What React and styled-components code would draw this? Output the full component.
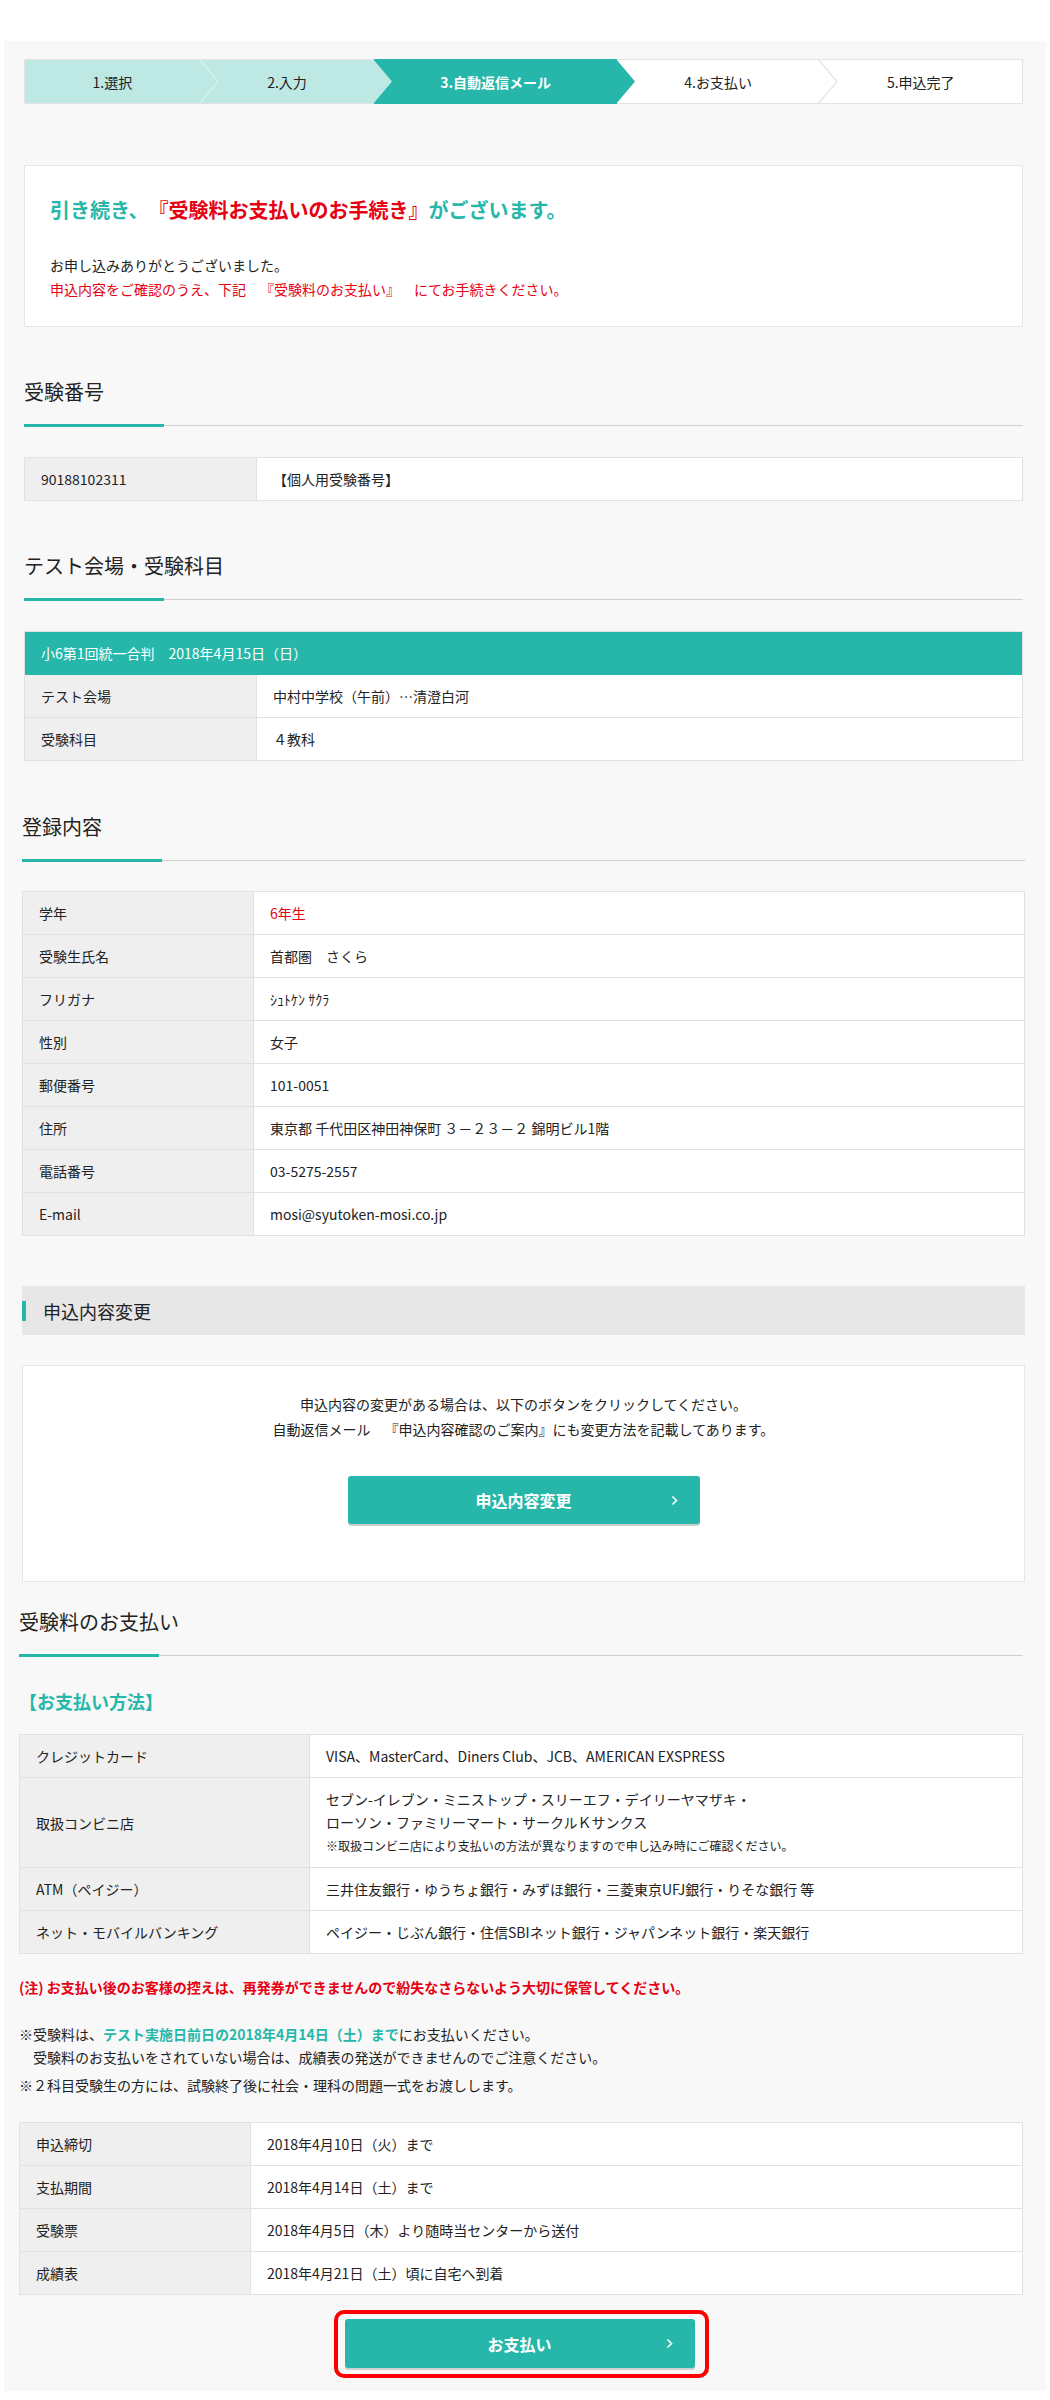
import React from 'react';
import styled, { createGlobalStyle } from 'styled-components';

const TEAL = '#26b7aa';
const LIGHT_TEAL = '#bde8e3';
const RED = '#e60012';
const LINE = '#e1e1e1';

const GlobalStyle = createGlobalStyle`
  * { box-sizing: border-box; }
  body {
    margin: 0;
    background: #fff;
    color: #222;
    font-family: "Noto Sans CJK JP", "Noto Sans", sans-serif;
    text-spacing-trim: space-all;
  }
`;

const Page = styled.div`
  padding-top: 41px;
`;

const Panel = styled.main`
  margin: 0 4px;
  padding: 18px 0 13px;
  background: #f8f8f8;
`;

const Section = styled.section`
  padding: 0 ${p => p.$r}px 0 ${p => p.$l}px;
`;

/* stepper */
const Stepper = styled.ol`
  display: flex;
  height: 45px;
  margin: 0;
  padding: 0;
  list-style: none;
`;

const Step = styled.li`
  position: relative;
  z-index: ${p => p.$z};
  flex: ${p => p.$grow} 1 0;
  display: flex;
  align-items: center;
  justify-content: center;
  background: ${p => p.$bg};
  color: ${p => (p.$active ? '#fff' : '#222')};
  font-size: 14px;
  font-weight: ${p => (p.$active ? 700 : 400)};
  border-top: 1px solid ${p => (p.$active ? TEAL : '#e3e3e3')};
  border-bottom: 1px solid ${p => (p.$active ? TEAL : '#e3e3e3')};
  &:first-child { border-left: 1px solid #e3e3e3; }
  &:last-child { border-right: 1px solid #e3e3e3; }
`;

const Chevron = styled.svg`
  position: absolute;
  top: -1px;
  right: -19px;
  width: 20px;
  height: 45px;
`;

const steps = [
  { label: '1.選択', grow: 175, bg: LIGHT_TEAL, line: '#dcf1ee' },
  { label: '2.入力', grow: 175, bg: LIGHT_TEAL },
  { label: '3.自動返信メール', grow: 243, bg: TEAL, active: true },
  { label: '4.お支払い', grow: 203, bg: '#fff', line: '#e3e3e3' },
  { label: '5.申込完了', grow: 203, bg: '#fff' },
];

/* message */
const MessageBox = styled.div`
  margin-top: 61px;
  padding: 29px 25px 25px;
  background: #fff;
  border: 1px solid #e6e6e6;
`;

const Lead = styled.h2`
  margin: 0;
  font-size: 20px;
  line-height: 30px;
  font-weight: 700;
  color: ${TEAL};
`;

const Em = styled.span`
  color: ${p => (p.$teal ? TEAL : RED)};
  font-weight: ${p => (p.$bold ? 700 : 'inherit')};
`;

const Body = styled.p`
  margin: ${p => p.$mt || 0}px 0 0;
  font-size: 14px;
  line-height: ${p => p.$lh || 24}px;
  color: ${p => (p.$red ? RED : '#222')};
`;

/* section title */
const Title = styled.h3`
  position: relative;
  margin: ${p => p.$mt}px 0 0;
  padding-bottom: 18px;
  font-size: 20px;
  line-height: 30px;
  font-weight: 400;
  border-bottom: 1px solid #cfcfcf;
  &::after {
    content: '';
    position: absolute;
    left: 0;
    bottom: -2px;
    width: 140px;
    height: 3px;
    background: ${TEAL};
  }
`;

/* tables */
const Table = styled.div`
  margin-top: ${p => p.$mt}px;
  border: 1px solid ${LINE};
  border-bottom: none;
  background: #fff;
  font-size: 14px;
`;

const Row = styled.div`
  display: grid;
  grid-template-columns: ${p => p.$label}px 1fr;
  border-bottom: 1px solid ${LINE};
`;

const HeadRow = styled.div`
  padding: 10px 16px;
  line-height: 22px;
  background: ${TEAL};
  color: #fff;
  border-bottom: 1px solid ${TEAL};
`;

const Label = styled.div`
  display: flex;
  align-items: center;
  padding: 10px 16px;
  line-height: 22px;
  background: #efefef;
  border-right: 1px solid ${LINE};
`;

const Value = styled.div`
  padding: 10px 16px;
  line-height: ${p => p.$lh || 22}px;
  color: ${p => (p.$red ? RED : 'inherit')};
`;

const Small = styled.div`
  font-size: 12px;
  line-height: 22px;
  padding-top: 1px;
`;

/* change request */
const Bar = styled.div`
  margin-top: 50px;
  height: 49px;
  display: flex;
  align-items: center;
  background: #e7e7e7;
`;

const BarTitle = styled.h3`
  margin: 0;
  padding-left: 17px;
  border-left: 4px solid ${TEAL};
  font-size: 18px;
  font-weight: 400;
  line-height: 20px;
`;

const ChangeBox = styled.div`
  margin-top: 30px;
  padding: 26px 20px 57px;
  background: #fff;
  border: 1px solid #e6e6e6;
  display: flex;
  flex-direction: column;
  align-items: center;
  text-align: center;
`;

const Button = styled.a`
  display: grid;
  grid-template-columns: 1fr auto 1fr;
  align-items: center;
  width: ${p => p.$w}px;
  height: ${p => p.$h}px;
  margin-top: ${p => p.$mt || 0}px;
  padding: 0 22px;
  background: ${TEAL};
  color: #fff;
  border-radius: 3px;
  box-shadow: 0 2px 0 #cfcfcf;
  font-size: 16px;
  font-weight: 700;
  text-decoration: none;
  span { grid-column: 2; }
  svg { grid-column: 3; justify-self: end; }
`;

const Arrow = () => (
  <svg width="7" height="11" viewBox="0 0 7 11">
    <polyline points="1.5,1.5 5.5,5.5 1.5,9.5" fill="none" stroke="#fff" strokeWidth="1.6" />
  </svg>
);

/* payment */
const MethodTitle = styled.h4`
  margin: 31px 0 0;
  font-size: 18px;
  line-height: 28px;
  font-weight: 700;
  color: ${TEAL};
`;

const Warning = styled.p`
  margin: 21px 0 0;
  font-size: 14px;
  line-height: 24px;
  font-weight: 700;
  color: ${RED};
`;

const Notes = styled.div`
  margin-top: 24px;
`;

const Center = styled.div`
  display: flex;
  justify-content: center;
  margin-top: 15px;
`;

const Highlight = styled.div`
  padding: 5px 10px 6px 7px;
  border: 4px solid #ff0000;
  border-radius: 10px;
`;

const entry = [
  ['学年', '6年生', true],
  ['受験生氏名', '首都圏　さくら'],
  ['フリガナ', 'ｼｭﾄｹﾝ ｻｸﾗ'],
  ['性別', '女子'],
  ['郵便番号', '101-0051'],
  ['住所', '東京都 千代田区神田神保町 ３－２３－２ 錦明ビル1階'],
  ['電話番号', '03-5275-2557'],
  ['E-mail', 'mosi@syutoken-mosi.co.jp'],
];

const schedule = [
  ['申込締切', '2018年4月10日（火）まで'],
  ['支払期間', '2018年4月14日（土）まで'],
  ['受験票', '2018年4月5日（木）より随時当センターから送付'],
  ['成績表', '2018年4月21日（土）頃に自宅へ到着'],
];

export default function App() {
  return (
    <Page>
      <GlobalStyle />
      <Panel>
        <Section $l={20} $r={23}>
          <Stepper>
            {steps.map((s, i) => (
              <Step key={s.label} $z={10 - i} $grow={s.grow} $bg={s.bg} $active={s.active}>
                {s.label}
                {i < steps.length - 1 && (
                  <Chevron viewBox="0 0 20 45">
                    <polygon points="0,0 19,22.5 0,45" fill={s.bg} />
                    {s.line && (
                      <polyline points="0,0 19,22.5 0,45" fill="none" stroke={s.line} strokeWidth="1.2" />
                    )}
                  </Chevron>
                )}
              </Step>
            ))}
          </Stepper>

          <MessageBox>
            <Lead>
              引き続き、<Em>『受験料お支払いのお手続き』</Em>がございます。
            </Lead>
            <Body $mt={28}>お申し込みありがとうございました。</Body>
            <Body $red>申込内容をご確認のうえ、下記　『受験料のお支払い』　にてお手続きください。</Body>
          </MessageBox>

          <Title $mt={50}>受験番号</Title>
          <Table $mt={31}>
            <Row $label={232}>
              <Label>90188102311</Label>
              <Value>【個人用受験番号】</Value>
            </Row>
          </Table>

          <Title $mt={50}>テスト会場・受験科目</Title>
          <Table $mt={31}>
            <HeadRow>小6第1回統一合判　2018年4月15日（日）</HeadRow>
            <Row $label={232}>
              <Label>テスト会場</Label>
              <Value>中村中学校（午前）…清澄白河</Value>
            </Row>
            <Row $label={232}>
              <Label>受験科目</Label>
              <Value>４教科</Value>
            </Row>
          </Table>
        </Section>

        <Section $l={18} $r={21}>
          <Title $mt={51}>登録内容</Title>
          <Table $mt={30}>
            {entry.map(([k, v, red]) => (
              <Row key={k} $label={231}>
                <Label>{k}</Label>
                <Value $red={red}>{v}</Value>
              </Row>
            ))}
          </Table>

          <Bar>
            <BarTitle>申込内容変更</BarTitle>
          </Bar>
          <ChangeBox>
            <Body $lh={25}>申込内容の変更がある場合は、以下のボタンをクリックしてください。</Body>
            <Body $lh={25}>自動返信メール　『申込内容確認のご案内』にも変更方法を記載してあります。</Body>
            <Button $w={352} $h={48} $mt={34}>
              <span>申込内容変更</span>
              <Arrow />
            </Button>
          </ChangeBox>
        </Section>

        <Section $l={15} $r={23}>
          <Title $mt={25}>受験料のお支払い</Title>
          <MethodTitle>【お支払い方法】</MethodTitle>
          <Table $mt={19}>
            <Row $label={290}>
              <Label>クレジットカード</Label>
              <Value>VISA、MasterCard、Diners Club、JCB、AMERICAN EXSPRESS</Value>
            </Row>
            <Row $label={290}>
              <Label>取扱コンビニ店</Label>
              <Value $lh={23}>
                セブン-イレブン・ミニストップ・スリーエフ・デイリーヤマザキ・
                <br />
                ローソン・ファミリーマート・サークルＫサンクス
                <Small>※取扱コンビニ店により支払いの方法が異なりますので申し込み時にご確認ください。</Small>
              </Value>
            </Row>
            <Row $label={290}>
              <Label>ATM（ペイジー）</Label>
              <Value>三井住友銀行・ゆうちょ銀行・みずほ銀行・三菱東京UFJ銀行・りそな銀行 等</Value>
            </Row>
            <Row $label={290}>
              <Label>ネット・モバイルバンキング</Label>
              <Value>ペイジー・じぶん銀行・住信SBIネット銀行・ジャパンネット銀行・楽天銀行</Value>
            </Row>
          </Table>

          <Warning>(注) お支払い後のお客様の控えは、再発券ができませんので紛失なさらないよう大切に保管してください。</Warning>

          <Notes>
            <Body $lh={23}>
              ※受験料は、<Em $teal $bold>テスト実施日前日の2018年4月14日（土）まで</Em>にお支払いください。
            </Body>
            <Body $lh={23}>　受験料のお支払いをされていない場合は、成績表の発送ができませんのでご注意ください。</Body>
            <Body $lh={23} $mt={5}>※２科目受験生の方には、試験終了後に社会・理科の問題一式をお渡しします。</Body>
          </Notes>

          <Table $mt={25}>
            {schedule.map(([k, v]) => (
              <Row key={k} $label={231}>
                <Label>{k}</Label>
                <Value>{v}</Value>
              </Row>
            ))}
          </Table>

          <Center>
            <Highlight>
              <Button $w={350} $h={49}>
                <span>お支払い</span>
                <Arrow />
              </Button>
            </Highlight>
          </Center>
        </Section>
      </Panel>
    </Page>
  );
}
